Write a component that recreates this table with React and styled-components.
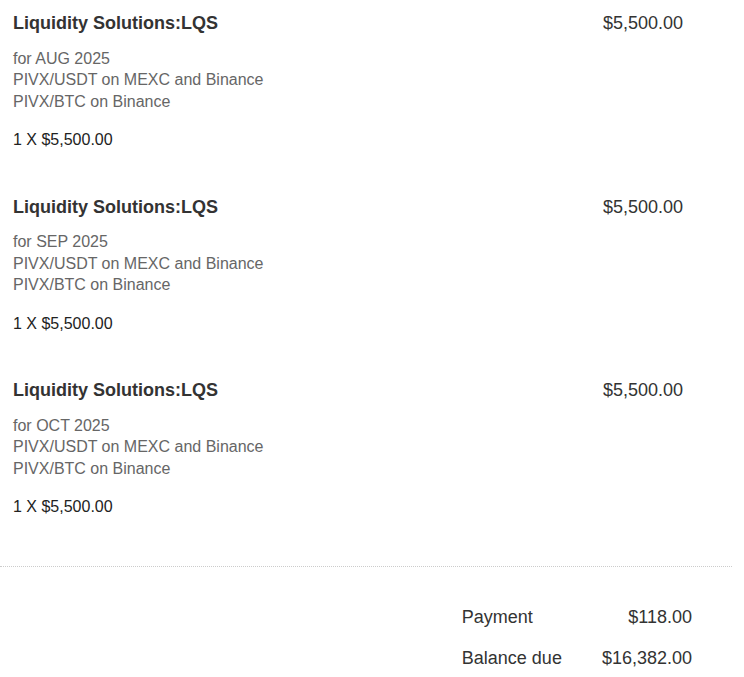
import React from "react";
import styled, { createGlobalStyle } from "styled-components";

const Global = createGlobalStyle`
    body {
        margin: 0;
        background: #fff;
        font-family: "Liberation Sans", Arial, sans-serif;
        color: #333;
    }
`;

const Invoice = styled.div`
    width: 732px;
`;

const ItemList = styled.div`
    padding: 13px 0 0 13px;
    display: flex;
    flex-direction: column;
    gap: 46px;
`;

const Item = styled.div`
    display: flex;
    justify-content: space-between;
    padding-right: 49px;
`;

const ItemBody = styled.div`
    display: flex;
    flex-direction: column;
`;

const ItemTitle = styled.div`
    font-size: 18px;
    line-height: 21.6px;
    font-weight: bold;
    color: #333;
`;

const ItemDesc = styled.div`
    margin-top: 13px;
    font-size: 16px;
    line-height: 21.5px;
    color: #666;
`;

const ItemQty = styled.div`
    margin-top: 17px;
    font-size: 16px;
    line-height: 21.5px;
    color: #222;
`;

const ItemPrice = styled.div`
    font-size: 18px;
    line-height: 21.6px;
    color: #333;
`;

const Divider = styled.hr`
    margin: 48px 0 0;
    border: none;
    border-top: 1px dotted #ccc;
    height: 0;
`;

const Totals = styled.div`
    display: grid;
    grid-template-columns: auto auto;
    justify-content: end;
    column-gap: 40px;
    row-gap: 19px;
    padding: 39px 40px 0 0;
    font-size: 18px;
    line-height: 22px;
    color: #333;
`;

const TotalValue = styled.div`
    text-align: right;
`;

const items = [
    { month: "AUG 2025" },
    { month: "SEP 2025" },
    { month: "OCT 2025" },
];

export default function App() {
    return (
        <Invoice>
            <Global />
            <ItemList>
                {items.map((it) => (
                    <Item key={it.month}>
                        <ItemBody>
                            <ItemTitle>Liquidity Solutions:LQS</ItemTitle>
                            <ItemDesc>
                                for {it.month}
                                <br />
                                PIVX/USDT on MEXC and Binance
                                <br />
                                PIVX/BTC on Binance
                            </ItemDesc>
                            <ItemQty>1 X $5,500.00</ItemQty>
                        </ItemBody>
                        <ItemPrice>$5,500.00</ItemPrice>
                    </Item>
                ))}
            </ItemList>
            <Divider />
            <Totals>
                <div>Payment</div>
                <TotalValue>$118.00</TotalValue>
                <div>Balance due</div>
                <TotalValue>$16,382.00</TotalValue>
            </Totals>
        </Invoice>
    );
}
